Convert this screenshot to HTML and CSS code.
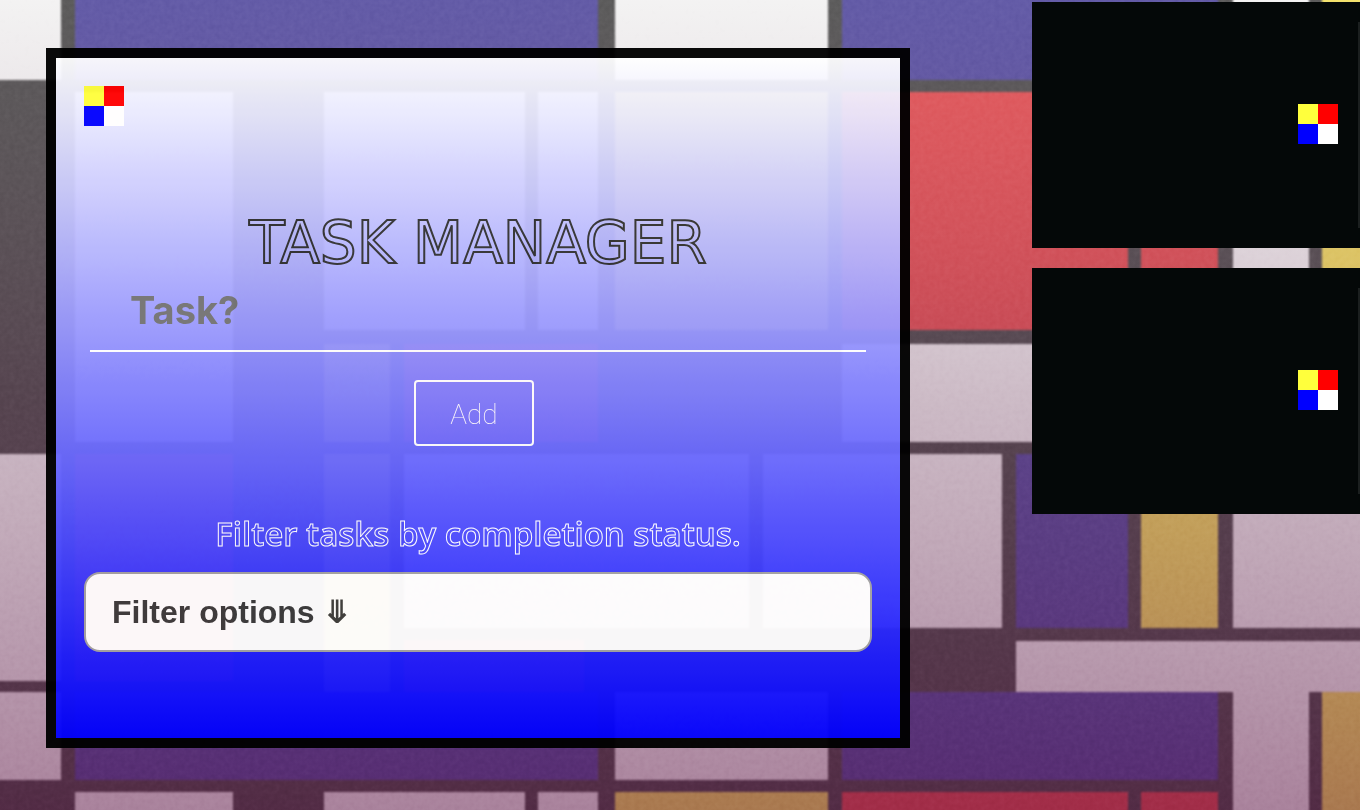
FILE: index.html
```html
<!DOCTYPE html>
<html lang="en">
<head>
<meta charset="utf-8">
<meta name="viewport" content="width=device-width, initial-scale=1">
<title>Task Manager</title>
<link rel="stylesheet" href="styles.css">
</head>
<body>
<svg class="mural" aria-hidden="true">
  <defs>
    <filter id="soft" x="0" y="0" width="100%" height="100%" color-interpolation-filters="sRGB"><feGaussianBlur stdDeviation="1"/></filter>
    <filter id="grain" x="0" y="0" width="100%" height="100%" color-interpolation-filters="sRGB">
      <feTurbulence type="fractalNoise" baseFrequency="0.2" numOctaves="2" seed="4"/>
      <feColorMatrix values="1 0 0 0 0  1 0 0 0 0  1 0 0 0 0  0 0 0 0 1"/>
    </filter>
    <linearGradient id="dusk" x1="0" y1="0" x2="0" y2="1">
      <stop offset="0" stop-color="#e2e0e0" stop-opacity=".41"/>
      <stop offset=".5" stop-color="#a07f94" stop-opacity=".54"/>
      <stop offset="1" stop-color="#7d4269" stop-opacity=".66"/>
    </linearGradient>
    <pattern id="blocks" x="-20" y="-8" width="1440" height="700" patternUnits="userSpaceOnUse">
      <rect width="1440" height="700" fill="#000"/>
      <g transform="translate(20 8)">
        <g fill="#fff">
          <path d="M-20-8H61V80H-20zM615-8H828V80H615zM1233-8H1309V442H1233z"/>
          <path d="M75 92H233V442H75zM324 92H525V330H324zM538 92H598V330H538z"/>
          <path d="M842 344H1218V442H842zM-20 454H61V681H-20z"/>
          <path d="M404 454H749V628H404zM763 454H1002V628H763zM1233 454H1420V628H1233zM1016 641H1420V692H1016z"/>
        </g>
        <path fill="#0c0080" d="M75-8H598V80H75zM842-8H1218V80H842zM1016 454H1128V628H1016z"/>
        <path fill="#e80408" d="M842 92H1128V330H842zM1141 92H1218V330H1141zM404 344H598V442H404zM75 454H233V681H75zM404 640H584V692H404z"/>
        <path fill="#ffe31e" d="M1322-8H1420V442H1322zM615 92H828V330H615zM324 344H390V442H324zM324 454H390V692H324zM1141 454H1218V628H1141z"/>
      </g>
    </pattern>
  </defs>
  <rect x="-1%" y="-1%" width="102%" height="102%" fill="url(#blocks)" filter="url(#soft)"/>
  <rect width="100%" height="100%" fill="url(#dusk)"/>
  <rect class="grain" width="100%" height="100%" filter="url(#grain)"/>
</svg>
<main class="layout">
  <section class="panel">
    <svg class="logo" viewBox="0 0 2 2" shape-rendering="crispEdges" role="img" aria-label="Logo">
      <path fill="#ffff3c" d="M0 0h1v1H0z"/><path fill="#f00" d="M1 0h1v1H1z"/>
      <path fill="#00f" d="M0 1h1v1H0z"/><path fill="#fff" d="M1 1h1v1H1z"/>
    </svg>
    <form class="task-form">
      <h1 class="title">TASK MANAGER</h1>
      <input class="task-input" type="text" placeholder="Task?" aria-label="Task">
      <button class="add" type="button">Add</button>
    </form>
    <label class="filter-label" for="filter">Filter tasks by completion status.</label>
    <select class="filter" id="filter">
      <option>Filter options ⤋</option>
    </select>
  </section>
  <section class="tasks" aria-label="Tasks">
    <article class="task">
      <svg class="logo" viewBox="0 0 2 2" shape-rendering="crispEdges" aria-hidden="true">
        <path fill="#ffff3c" d="M0 0h1v1H0z"/><path fill="#f00" d="M1 0h1v1H1z"/>
        <path fill="#00f" d="M0 1h1v1H0z"/><path fill="#fff" d="M1 1h1v1H1z"/>
      </svg>
      <div class="task-edge"></div>
    </article>
    <article class="task">
      <svg class="logo" viewBox="0 0 2 2" shape-rendering="crispEdges" aria-hidden="true">
        <path fill="#ffff3c" d="M0 0h1v1H0z"/><path fill="#f00" d="M1 0h1v1H1z"/>
        <path fill="#00f" d="M0 1h1v1H0z"/><path fill="#fff" d="M1 1h1v1H1z"/>
      </svg>
      <div class="task-edge"></div>
    </article>
  </section>
</main>
</body>
</html>
```
FILE: styles.css
```css
* { box-sizing: border-box; }

body {
  margin: 0;
  min-height: 100vh;
  font-family: "Liberation Sans", Arial, sans-serif;
}

.mural {
  position: fixed;
  inset: 0;
  z-index: -1;
  width: 100%;
  height: 100%;
}

.grain {
  mix-blend-mode: soft-light;
  opacity: .1;
}

.layout {
  display: grid;
  grid-template-columns: minmax(0, 864fr) minmax(0, 328fr);
  gap: 122px;
  align-items: start;
  padding-left: 46px;
}

.panel {
  display: flex;
  flex-direction: column;
  margin-top: 48px;
  padding: 28px 28px 86px;
  border: 10px solid #000;
  background: linear-gradient(rgba(255, 255, 255, .98), rgba(0, 0, 255, .98)) padding-box;
  opacity: .96;
}

.logo {
  display: block;
  flex: none;
  width: 40px;
  height: 40px;
}

.task-form {
  display: flex;
  flex-direction: column;
  align-items: center;
  padding: 82px 6px 0;
}

.title {
  margin: 0;
  font: 400 58px/70px "DejaVu Sans", sans-serif;
  color: transparent;
  -webkit-text-stroke: 2px #333;
}

.task-input {
  width: 100%;
  height: 74px;
  padding: 0 40px 8px;
  border: 0;
  border-bottom: 2px solid #fff;
  background: none;
  font: 700 38px/48px Inter, sans-serif;
}

.task-input::placeholder {
  color: #757575;
  opacity: 1;
}

.add {
  width: 120px;
  height: 66px;
  margin: 28px 8px 0 0;
  padding: 4px 0 0;
  border: 2px solid #fff;
  border-radius: 4px;
  background: none;
  color: #fff;
  font: 100 28px/32px Roboto, sans-serif;
}

.filter-label {
  margin-top: 64px;
  text-align: center;
  font: 600 33px/48px "Open Sans", sans-serif;
  color: transparent;
  -webkit-text-stroke: 1px #fff;
}

.filter {
  appearance: none;
  width: 100%;
  height: 80px;
  margin-top: 14px;
  padding: 0 26px;
  border: 2px solid #a3a3a3;
  border-radius: 16px;
  background: #fff;
  color: #3c3c3c;
  font: 700 32px/40px "Liberation Sans", "DejaVu Sans", sans-serif;
}

.tasks {
  display: flex;
  flex-direction: column;
  gap: 20px;
  padding-top: 2px;
}

.task {
  display: flex;
  justify-content: flex-end;
  align-items: center;
  gap: 20px;
  height: 246px;
  padding: 20px 0;
  background: #040808;
}

.task .logo { margin-bottom: 2px; }

.task-edge {
  align-self: stretch;
  width: 2px;
  background: #1b1f1f;
}
```
